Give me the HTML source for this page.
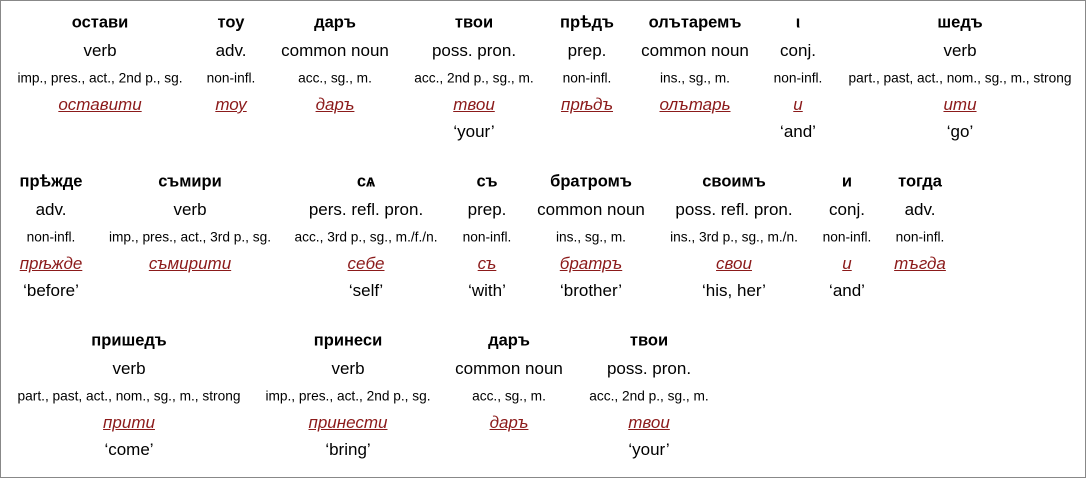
<!DOCTYPE html><html><head><meta charset="utf-8"><style>
body{margin:0;width:1086px;height:478px;background:#fff;font-family:"Liberation Sans",sans-serif;color:#000;overflow:hidden}
.fr{position:absolute;left:0;top:0;width:1084px;height:476px;border:1px solid #888}
.c{position:absolute;transform:translateX(-50%);text-align:center;white-space:nowrap}
.c div{position:absolute;left:50%;transform:translate(-50%,-50%);white-space:nowrap}
.w{font-weight:bold;font-size:16.5px;top:0}
.p{font-size:17px;top:28px}
.m{font-size:13.7px;top:55px}
.l{font-size:17px;top:82px;font-style:italic;color:#8b1a1a;text-decoration:underline}
.g{font-size:17px;top:109px}
</style></head><body><div class="fr"></div>
<div class="c" style="left:100px;top:23px"><div class="w">остави</div><div class="p">verb</div><div class="m">imp., pres., act., 2nd p., sg.</div><div class="l">оставити</div></div>
<div class="c" style="left:231px;top:23px"><div class="w">тоу</div><div class="p">adv.</div><div class="m">non-infl.</div><div class="l">тоу</div></div>
<div class="c" style="left:335px;top:23px"><div class="w">даръ</div><div class="p">common noun</div><div class="m">acc., sg., m.</div><div class="l">даръ</div></div>
<div class="c" style="left:474px;top:23px"><div class="w">твои</div><div class="p">poss. pron.</div><div class="m">acc., 2nd p., sg., m.</div><div class="l">твои</div><div class="g">‘your’</div></div>
<div class="c" style="left:587px;top:23px"><div class="w">прѣдъ</div><div class="p">prep.</div><div class="m">non-infl.</div><div class="l">прѣдъ</div></div>
<div class="c" style="left:695px;top:23px"><div class="w">олътаремъ</div><div class="p">common noun</div><div class="m">ins., sg., m.</div><div class="l">олътарь</div></div>
<div class="c" style="left:798px;top:23px"><div class="w">ι</div><div class="p">conj.</div><div class="m">non-infl.</div><div class="l">и</div><div class="g">‘and’</div></div>
<div class="c" style="left:960px;top:23px"><div class="w">шедъ</div><div class="p">verb</div><div class="m">part., past, act., nom., sg., m., strong</div><div class="l">ити</div><div class="g">‘go’</div></div>

<div class="c" style="left:51px;top:182px"><div class="w">прѣжде</div><div class="p">adv.</div><div class="m">non-infl.</div><div class="l">прѣжде</div><div class="g">‘before’</div></div>
<div class="c" style="left:190px;top:182px"><div class="w">съмири</div><div class="p">verb</div><div class="m">imp., pres., act., 3rd p., sg.</div><div class="l">съмирити</div></div>
<div class="c" style="left:366px;top:182px"><div class="w">сѧ</div><div class="p">pers. refl. pron.</div><div class="m">acc., 3rd p., sg., m./f./n.</div><div class="l">себе</div><div class="g">‘self’</div></div>
<div class="c" style="left:487px;top:182px"><div class="w">съ</div><div class="p">prep.</div><div class="m">non-infl.</div><div class="l">съ</div><div class="g">‘with’</div></div>
<div class="c" style="left:591px;top:182px"><div class="w">братромъ</div><div class="p">common noun</div><div class="m">ins., sg., m.</div><div class="l">братръ</div><div class="g">‘brother’</div></div>
<div class="c" style="left:734px;top:182px"><div class="w">своимъ</div><div class="p">poss. refl. pron.</div><div class="m">ins., 3rd p., sg., m./n.</div><div class="l">свои</div><div class="g">‘his, her’</div></div>
<div class="c" style="left:847px;top:182px"><div class="w">и</div><div class="p">conj.</div><div class="m">non-infl.</div><div class="l">и</div><div class="g">‘and’</div></div>
<div class="c" style="left:920px;top:182px"><div class="w">тогда</div><div class="p">adv.</div><div class="m">non-infl.</div><div class="l">тъгда</div></div>

<div class="c" style="left:129px;top:341px"><div class="w">пришедъ</div><div class="p">verb</div><div class="m">part., past, act., nom., sg., m., strong</div><div class="l">прити</div><div class="g">‘come’</div></div>
<div class="c" style="left:348px;top:341px"><div class="w">принеси</div><div class="p">verb</div><div class="m">imp., pres., act., 2nd p., sg.</div><div class="l">принести</div><div class="g">‘bring’</div></div>
<div class="c" style="left:509px;top:341px"><div class="w">даръ</div><div class="p">common noun</div><div class="m">acc., sg., m.</div><div class="l">даръ</div></div>
<div class="c" style="left:649px;top:341px"><div class="w">твои</div><div class="p">poss. pron.</div><div class="m">acc., 2nd p., sg., m.</div><div class="l">твои</div><div class="g">‘your’</div></div>
</body></html>
